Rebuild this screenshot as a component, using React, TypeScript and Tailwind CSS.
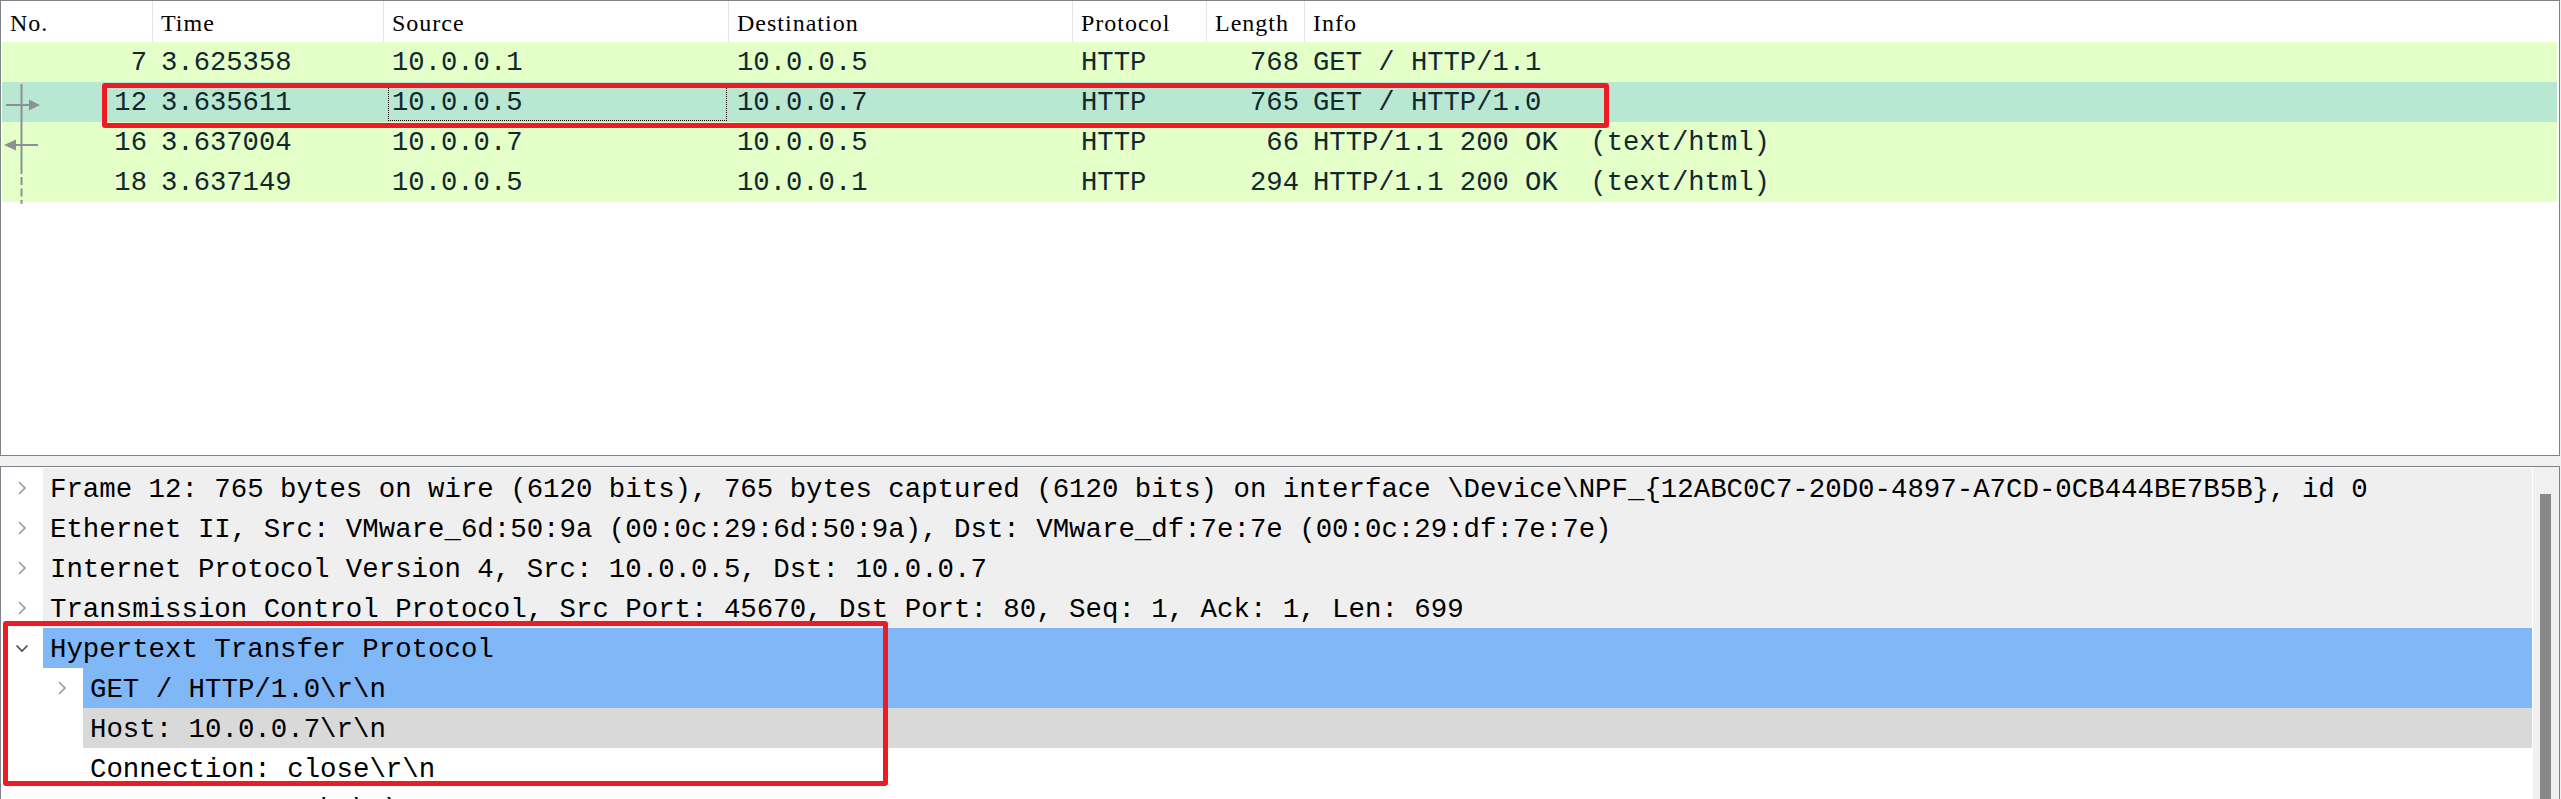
import React from "react";

type Packet = {
  no: number;
  time: string;
  src: string;
  dst: string;
  proto: string;
  len: number;
  info: string;
  selected?: boolean;
  mark?: "out" | "in" | "end";
};

const packets: Packet[] = [
  { no: 7, time: "3.625358", src: "10.0.0.1", dst: "10.0.0.5", proto: "HTTP", len: 768, info: "GET / HTTP/1.1" },
  { no: 12, time: "3.635611", src: "10.0.0.5", dst: "10.0.0.7", proto: "HTTP", len: 765, info: "GET / HTTP/1.0", selected: true, mark: "out" },
  { no: 16, time: "3.637004", src: "10.0.0.7", dst: "10.0.0.5", proto: "HTTP", len: 66, info: "HTTP/1.1 200 OK  (text/html)", mark: "in" },
  { no: 18, time: "3.637149", src: "10.0.0.5", dst: "10.0.0.1", proto: "HTTP", len: 294, info: "HTTP/1.1 200 OK  (text/html)", mark: "end" },
];

type TreeRow = {
  level: number;
  text: string;
  toggle?: "open" | "closed";
  bg: string;
};

const tree: TreeRow[] = [
  { level: 0, toggle: "closed", bg: "bg-[#efefef]", text: "Frame 12: 765 bytes on wire (6120 bits), 765 bytes captured (6120 bits) on interface \\Device\\NPF_{12ABC0C7-20D0-4897-A7CD-0CB444BE7B5B}, id 0" },
  { level: 0, toggle: "closed", bg: "bg-[#efefef]", text: "Ethernet II, Src: VMware_6d:50:9a (00:0c:29:6d:50:9a), Dst: VMware_df:7e:7e (00:0c:29:df:7e:7e)" },
  { level: 0, toggle: "closed", bg: "bg-[#efefef]", text: "Internet Protocol Version 4, Src: 10.0.0.5, Dst: 10.0.0.7" },
  { level: 0, toggle: "closed", bg: "bg-[#efefef]", text: "Transmission Control Protocol, Src Port: 45670, Dst Port: 80, Seq: 1, Ack: 1, Len: 699" },
  { level: 0, toggle: "open", bg: "bg-[#80b7f6]", text: "Hypertext Transfer Protocol" },
  { level: 1, toggle: "closed", bg: "bg-[#80b7f6]", text: "GET / HTTP/1.0\\r\\n" },
  { level: 1, bg: "bg-[#d9d9d9]", text: "Host: 10.0.0.7\\r\\n" },
  { level: 1, bg: "bg-white", text: "Connection: close\\r\\n" },
  { level: 1, bg: "bg-white", text: "Pragma: no-cache\\r\\n" },
];

function RelatedMark({ kind }: { kind?: Packet["mark"] }) {
  if (!kind) return null;
  return (
    <svg width="44" height="40" viewBox="0 0 44 40" className="absolute left-0 top-0">
      {kind === "end" ? (
        <>
          <line x1="19.5" y1="0" x2="19.5" y2="10" stroke="#8c9096" strokeWidth="2" />
          <line x1="19.5" y1="13" x2="19.5" y2="41" stroke="#8c9096" strokeWidth="2" strokeDasharray="8 3.5" />
        </>
      ) : (
        <line x1="19.5" y1="0" x2="19.5" y2="40" stroke="#8c9096" strokeWidth="2" />
      )}
      {kind === "out" && (
        <>
          <line x1="4" y1="21" x2="28" y2="21" stroke="#8c9096" strokeWidth="2" />
          <path d="M27 15.5 L38 21 L27 26.5 Z" fill="#8c9096" />
        </>
      )}
      {kind === "in" && (
        <>
          <line x1="13" y1="21" x2="36" y2="21" stroke="#8c9096" strokeWidth="2" />
          <path d="M14 15.5 L2 21 L14 26.5 Z" fill="#8c9096" />
        </>
      )}
    </svg>
  );
}

function Chevron({ open }: { open: boolean }) {
  return open ? (
    <svg width="14" height="14" viewBox="0 0 14 14">
      <path d="M1.5 4.5 L7 10 L12.5 4.5" fill="none" stroke="#4a4a4a" strokeWidth="1.6" />
    </svg>
  ) : (
    <svg width="14" height="14" viewBox="0 0 14 14">
      <path d="M4 1 L10 7 L4 13" fill="none" stroke="#9a9a9a" strokeWidth="1.6" />
    </svg>
  );
}

const headers = [
  { label: "No.", w: "w-[151px]" },
  { label: "Time", w: "w-[231px]" },
  { label: "Source", w: "w-[345px]" },
  { label: "Destination", w: "w-[344px]" },
  { label: "Protocol", w: "w-[134px]" },
  { label: "Length", w: "w-[98px]" },
  { label: "Info", w: "flex-1" },
];

export default function App() {
  return (
    <div className="relative flex h-[799px] w-full flex-col overflow-hidden bg-[#f0f0f0]">
      {/* packet list */}
      <div className="mr-px flex h-[456px] shrink-0 flex-col border border-[#7d8389] bg-white pl-px pr-[2px]">
        <div className="flex h-[41px] shrink-0 font-['Liberation_Serif',serif] text-[24px] tracking-[1px] text-black">
          {headers.map((h) => (
            <div key={h.label} className={`${h.w} flex items-center border-r border-[#e5e5e5] pl-[8px] pt-[2px] last:border-r-0`}>
              {h.label}
            </div>
          ))}
        </div>
        {packets.map((p) => (
          <div
            key={p.no}
            className={`flex h-[40px] shrink-0 items-center whitespace-pre pt-[2px] font-['Liberation_Mono',monospace] text-[27.2px] text-[#12272e] ${
              p.selected ? "bg-[#b8e8d2]" : "bg-[#e4ffc7]"
            }`}
          >
            <div className="relative flex h-full w-[151px] items-center justify-end pr-[6px]">
              <RelatedMark kind={p.mark} />
              {p.no}
            </div>
            <div className="w-[231px] pl-[8px]">{p.time}</div>
            <div className="relative flex h-full w-[345px] items-center pl-[8px]">
              {p.selected && <div className="absolute bottom-px left-[4px] right-[2px] top-0 border border-dotted border-black" />}
              {p.src}
            </div>
            <div className="w-[344px] pl-[8px]">{p.dst}</div>
            <div className="w-[134px] pl-[8px]">{p.proto}</div>
            <div className="w-[98px] pr-[6px] text-right">{p.len}</div>
            <div className="flex-1 pl-[8px]">{p.info}</div>
          </div>
        ))}
      </div>

      {/* splitter */}
      <div className="h-[10px] shrink-0" />

      {/* packet details */}
      <div className="mr-px flex min-h-0 flex-1 border-l border-r border-t border-[#7d8389] bg-white">
        <div className="flex-1 pt-px font-['Liberation_Mono',monospace] text-[27.4px] text-black">
          {tree.map((r, i) => (
            <div key={i} className="flex h-[40px] whitespace-pre">
              <div className={`flex shrink-0 items-center ${r.level === 0 ? "w-[42px] pl-[14px]" : "w-[82px] pl-[54px]"}`}>
                {r.toggle && <Chevron open={r.toggle === "open"} />}
              </div>
              <div className={`flex flex-1 items-center pl-[7px] pt-[4px] ${r.bg}`}>{r.text}</div>
            </div>
          ))}
        </div>
        <div className="relative w-[27px] shrink-0 border-l border-white bg-[#f0f0f0]">
          <div className="absolute bottom-0 left-[7px] top-[27px] w-[11px] bg-[#888888]" />
        </div>
      </div>

      {/* annotation boxes */}
      <div className="absolute left-[102px] top-[83px] h-[45px] w-[1507px] rounded-[3px] border-[5px] border-[#ed1c24]" />
      <div className="absolute left-[3px] top-[621px] h-[165px] w-[885px] rounded-[3px] border-[5px] border-[#ed1c24]" />
    </div>
  );
}
